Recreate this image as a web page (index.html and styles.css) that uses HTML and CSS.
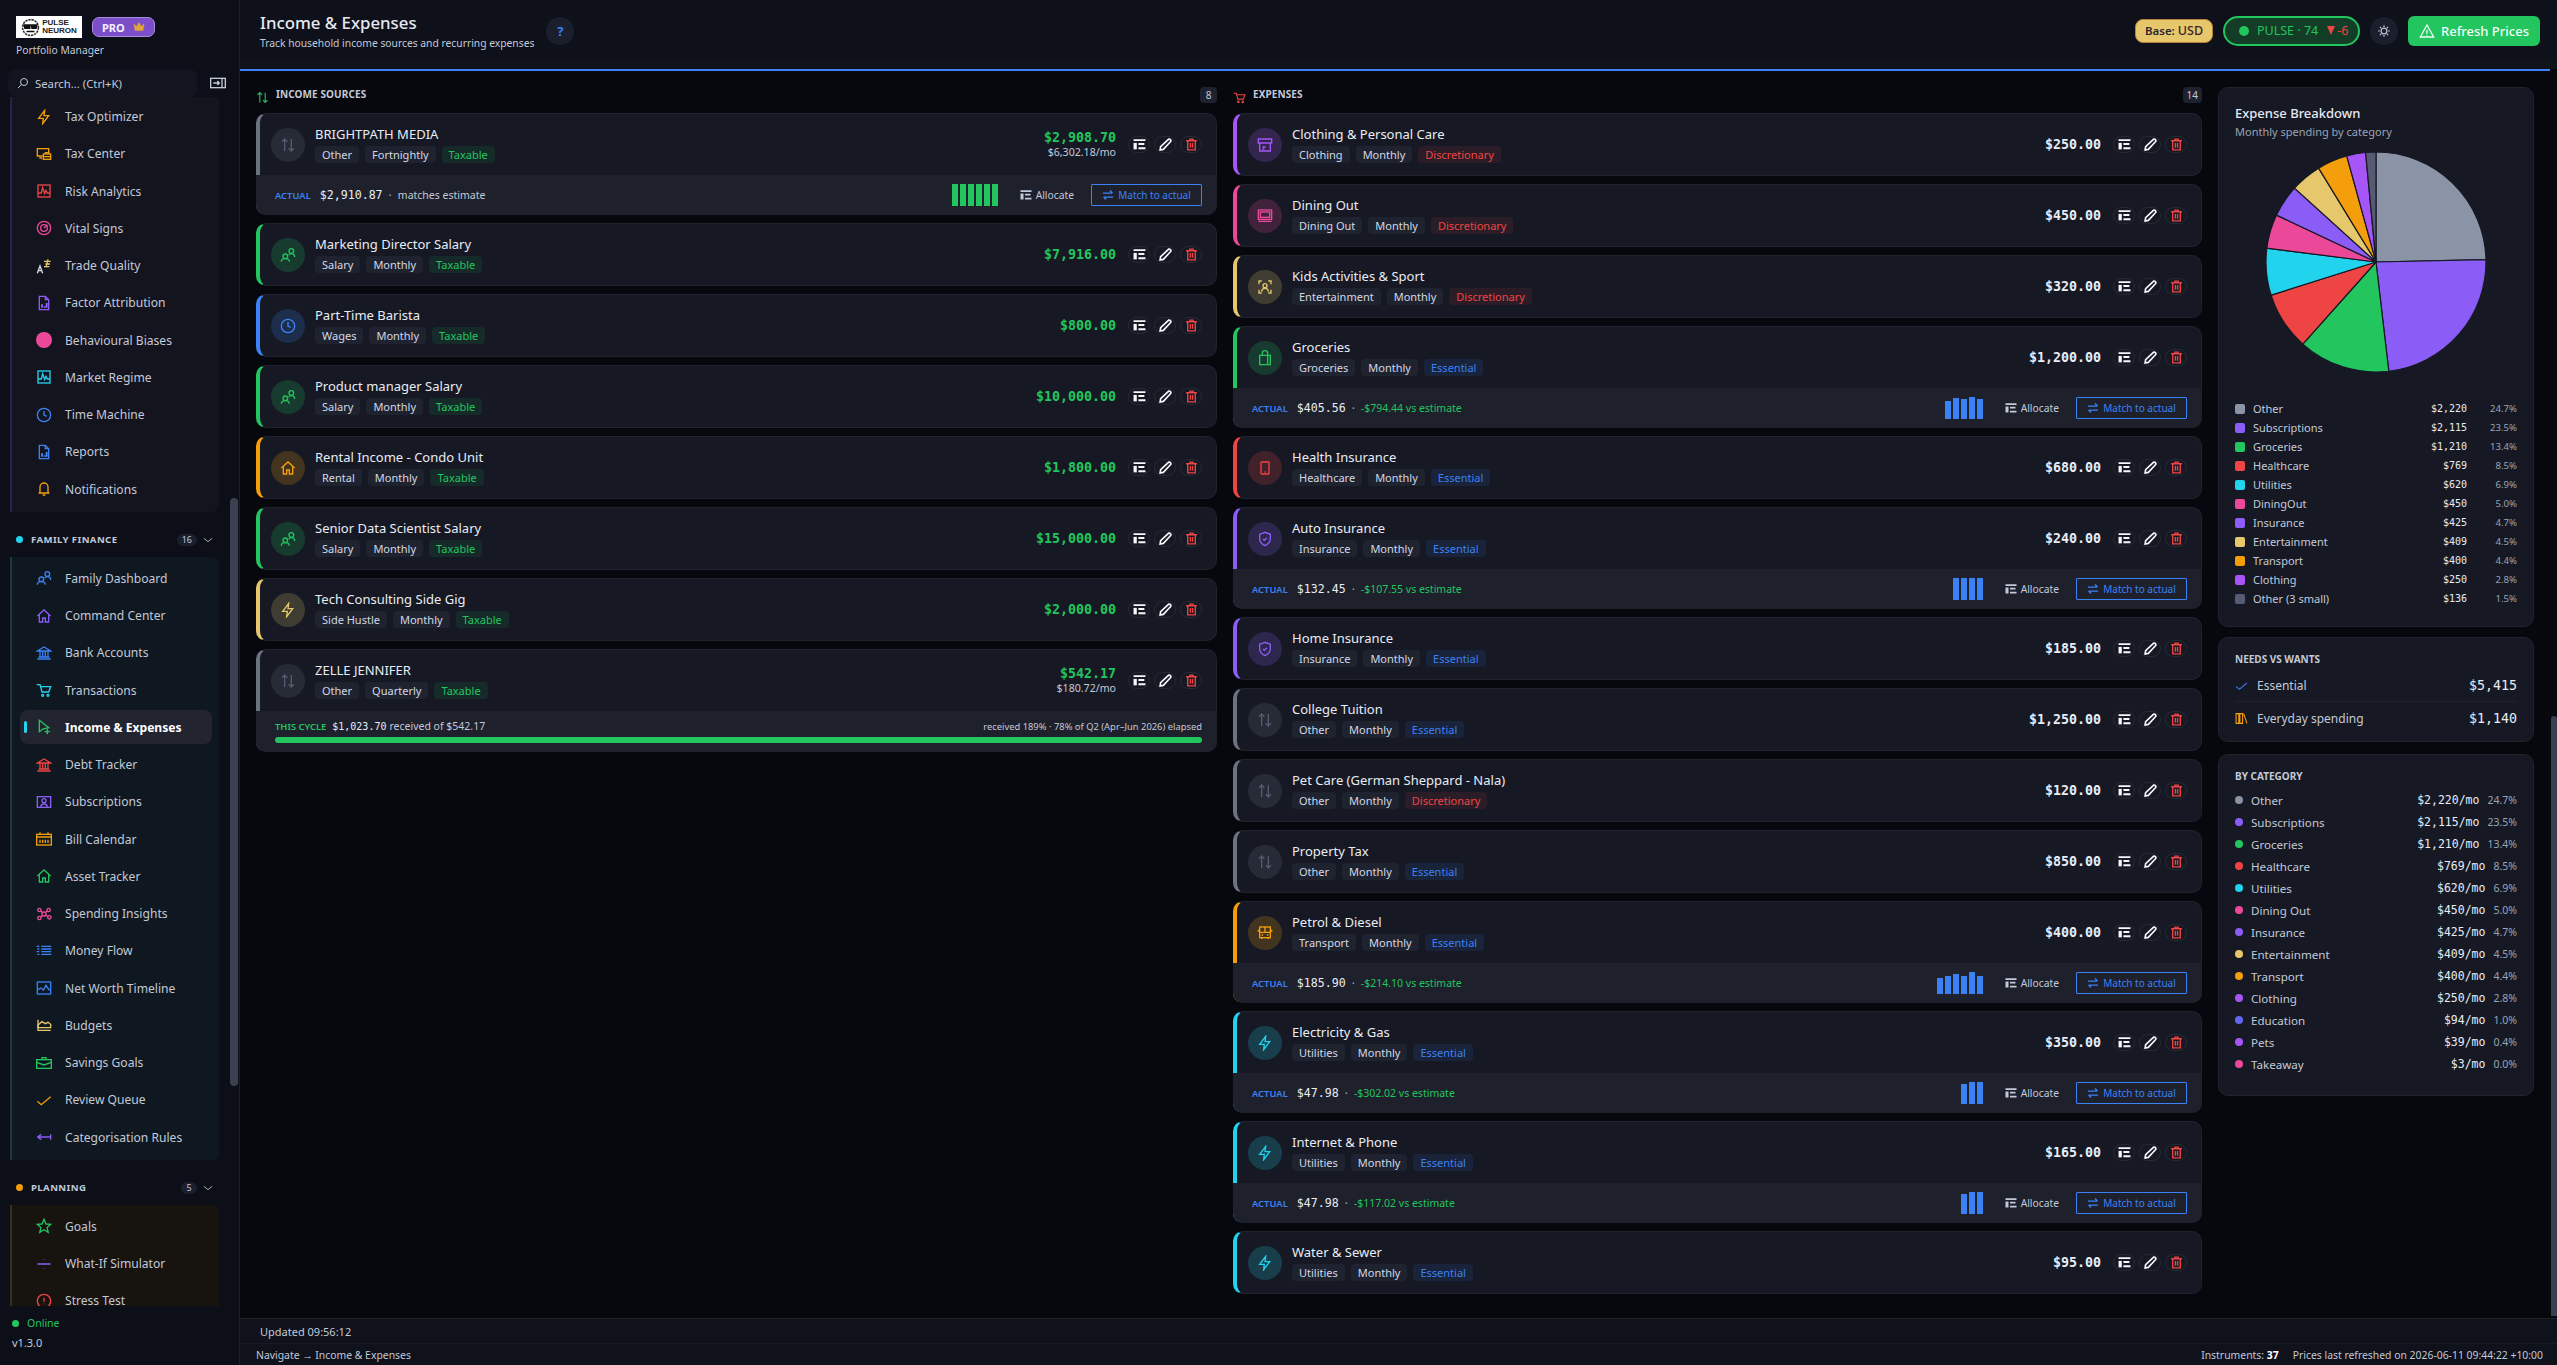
FILE: index.html
```html
<!DOCTYPE html>
<html lang="en">
<head>
    <meta charset="UTF-8">
    <title>Income &amp; Expenses</title>
    <link rel="stylesheet" href="styles.css">
</head>
<body>
    <!-- icon sheet -->
    <svg class="sheet" xmlns="http://www.w3.org/2000/svg">
        <symbol id="i-zap" viewBox="0 0 24 24"><path d="M13 2 4 14h7l-1 8 9-12h-7z"/></symbol>
        <symbol id="i-tax" viewBox="0 0 24 24"><path d="M10 15H2V4h17v7M5 18h4"/><rect x="11" y="12" width="11" height="8"/><path d="M14 12v-2h5v2M11 16h11"/></symbol>
        <symbol id="i-chartbox" viewBox="0 0 24 24"><rect x="3" y="3" width="18" height="18"/><path d="M3 15h5l2-8 3 9 2-5 2 4h4"/></symbol>
        <symbol id="i-gauge" viewBox="0 0 24 24"><circle cx="12" cy="12" r="10"/><circle cx="12" cy="12" r="5"/><path d="m12 12 5-5"/></symbol>
        <symbol id="i-trade" viewBox="0 0 24 24"><path d="M12 5h10M14 9h7M12 13h8M18 2l-3 12"/><path d="M2 23 6 12l4 11M4 19h4" stroke="#d8dce6"/></symbol>
        <symbol id="i-filebars" viewBox="0 0 24 24"><path d="M5 2h9l5 5v15H5z"/><path d="M14 2v5h5"/><path d="M9 19v-5M13 19v-2M16 19v-7" stroke-width="3"/></symbol>
        <symbol id="i-clock" viewBox="0 0 24 24"><circle cx="12" cy="12" r="10"/><path d="M12 6v6l4 2"/></symbol>
        <symbol id="i-bell" viewBox="0 0 24 24"><path d="M6 17V9a6 6 0 0 1 12 0v8l2 1H4zM10 21h4M12 2v1"/></symbol>
        <symbol id="i-users" viewBox="0 0 24 24"><circle cx="8" cy="14" r="3.5"/><path d="M2 22c0-3 2-4.5 6-4.5s6 1.500 6 4.500"/><circle cx="17" cy="6" r="3.500"/><path d="M13 12c1-1 2-2 4-2 3 0 5 2 5 5"/></symbol>
        <symbol id="i-home" viewBox="0 0 24 24"><path d="M2 12 12 3l10 9"/><path d="M5 10v11h5v-6h4v6h5V10"/></symbol>
        <symbol id="i-bank" viewBox="0 0 24 24"><path d="M2 9l10-6 10 6zM2 21h20M4 18h16M6 9v9M10 9v9M14 9v9M18 9v9"/></symbol>
        <symbol id="i-cart" viewBox="0 0 24 24"><path d="M1 4h5l3 11h10l3-8H7"/><circle cx="10" cy="20" r="1.500"/><circle cx="18" cy="20" r="1.500"/></symbol>
        <symbol id="i-cursor" viewBox="0 0 24 24"><path d="M5 2v17l5-4 9-2z"/><path d="M13 19h8M17 15v8"/></symbol>
        <symbol id="i-sub" viewBox="0 0 24 24"><rect x="2" y="4" width="20" height="16"/><circle cx="12" cy="10" r="3"/><path d="M7 20c0-3 2-5 5-5s5 2 5 5"/></symbol>
        <symbol id="i-cal" viewBox="0 0 24 24"><rect x="1" y="5" width="22" height="16"/><path d="M1 9h22M6 2v4M18 2v4M6 13v5M10 13v5M14 13v5M18 13v5"/></symbol>
        <symbol id="i-net" viewBox="0 0 24 24"><circle cx="12" cy="12" r="3"/><circle cx="5" cy="6" r="2.500"/><circle cx="19" cy="6" r="2.500"/><circle cx="5" cy="18" r="2.500"/><circle cx="20" cy="17" r="2.500"/><path d="m7 7 3 3M17 7l-3 3M7 17l3-3M18 16l-4-3"/></symbol>
        <symbol id="i-flow" viewBox="0 0 24 24"><path d="M8 5h15M8 9h15M8 13h15M8 17h15M1 5h4M2 9h3M1 13h4M2 17h3"/></symbol>
        <symbol id="i-area" viewBox="0 0 24 24"><rect x="2" y="3" width="20" height="18"/><path d="m2 15 5-3 4 3 4-7 4 6 3 1"/></symbol>
        <symbol id="i-budget" viewBox="0 0 24 24"><path d="M3 4v16h19"/><path d="M3 12l6-5 5 3 4-2 4 3v5H3z"/></symbol>
        <symbol id="i-case" viewBox="0 0 24 24"><rect x="1" y="7" width="22" height="13"/><path d="M9 7V4h6v3M1 11l11 4 11-4"/></symbol>
        <symbol id="i-check" viewBox="0 0 24 24"><path d="M2 14l6 5L22 7"/></symbol>
        <symbol id="i-rule" viewBox="0 0 24 24"><path d="M2 12h19M2 12l6-4M2 12l6 4M22 8v8"/></symbol>
        <symbol id="i-star" viewBox="0 0 24 24"><path d="m12 2 3 7 7 .6-5.300 4.700 1.600 7.200L12 17.500 5.700 21.500l1.600-7.200L2 9.600 9 9z"/></symbol>
        <symbol id="i-divide" viewBox="0 0 24 24"><path d="M2 12h20M12 5v.5M12 18.500v.5"/></symbol>
        <symbol id="i-alert" viewBox="0 0 24 24"><circle cx="12" cy="12" r="10"/><path d="M12 7v6M12 16v1"/></symbol>
        <symbol id="i-updown" viewBox="0 0 24 24"><path d="M7 21V3M3 7l4-4 4 4M17 3v18M13 17l4 4 4-4"/></symbol>
        <symbol id="i-archive" viewBox="0 0 24 24"><path d="M2 3h20v6H2zM4 9v12h16V9M8 15h5M8 18h3"/></symbol>
        <symbol id="i-monitor" viewBox="0 0 24 24"><rect x="2" y="3" width="20" height="14"/><rect x="5" y="6" width="14" height="8"/><path d="M2 20h20"/></symbol>
        <symbol id="i-scan" viewBox="0 0 24 24"><path d="M3 8V3h4M17 3h4v5M21 16v5h-4M7 21H3v-5"/><circle cx="12" cy="10" r="3"/><path d="M7 19c0-3 2-5 5-5s5 2 5 5"/></symbol>
        <symbol id="i-bag" viewBox="0 0 24 24"><path d="M4 8h16v14H4z"/><path d="M8 8V5a4 4 0 0 1 8 0v3M16 8v14"/></symbol>
        <symbol id="i-tablet" viewBox="0 0 24 24"><rect x="6" y="3" width="12" height="18" rx="1"/><path d="M11 18h2"/></symbol>
        <symbol id="i-shield" viewBox="0 0 24 24"><path d="M12 2 4 5v7c0 5 4 8 8 10 4-2 8-5 8-10V5z"/><path d="m9 12 2 2 4-4"/></symbol>
        <symbol id="i-bus" viewBox="0 0 24 24"><rect x="4" y="3" width="16" height="16"/><path d="M4 11h16M12 3v8M2 7v3M22 7v3M7 19v2M17 19v2M7 15h2M15 15h2"/></symbol>
        <symbol id="i-search" viewBox="0 0 24 24"><circle cx="14" cy="10" r="7"/><path d="M9 15 2 22"/></symbol>
        <symbol id="i-panel" viewBox="0 0 24 24"><rect x="1" y="5" width="22" height="14"/><path d="M5 12h9M11 9l3 3-3 3M18 5v14"/></symbol>
        <symbol id="i-sun" viewBox="0 0 24 24"><circle cx="12" cy="12" r="5"/><path d="M12 2v3M12 19v3M2 12h3M19 12h3M5 5l2 2M17 17l2 2M5 19l2-2M17 7l2-2"/></symbol>
        <symbol id="i-warn" viewBox="0 0 24 24"><path d="M12 3 2 21h20z"/><path d="M12 10v6M12 18v1"/></symbol>
        <symbol id="i-list" viewBox="0 0 24 24"><path d="M1 9h6v12H1z" fill="currentColor" stroke="none"/><path d="M1 4h22M10 11h11M10 19h13" stroke-width="3.500"/></symbol>
        <symbol id="i-pencil" viewBox="0 0 24 24"><path d="M18 2a3.500 3.500 0 0 1 4 4L8 21l-6 1 1-6z" stroke-width="3"/></symbol>
        <symbol id="i-trash" viewBox="0 0 24 24"><path d="M2 5h20M9 5V2h6v3M5 5v17h14V5M10 9v9M14 9v9" stroke-width="2.500"/></symbol>
        <symbol id="i-swap" viewBox="0 0 24 24"><path d="M2 8h18M16 3l5 5M22 16H4M8 21l-5-5" stroke-width="2.500"/></symbol>
        <symbol id="i-books" viewBox="0 0 24 24"><path d="M2 3h5v18H2zM9 3h5v18H9zM16 3l6 18"/></symbol>
        <symbol id="i-crown" viewBox="0 0 24 24"><path d="M2 6l5 5 5-8 5 8 5-5-2 13H4z" fill="currentColor"/></symbol>
    </svg>

    <!-- menu lateral -->
    <aside class="sidebar">
        <div class="side-top">
            <div class="brand">
                <div class="logo">
                    <svg class="logo-mark" viewBox="0 0 24 24"><circle cx="12" cy="12" r="10" fill="none" stroke="#333" stroke-width="2" stroke-dasharray="3 1"/><path d="M4 9h7v4H5zM13 9h7l-1 4h-5zM7 17h10" fill="#111" stroke="#111"/></svg>
                    <div class="logo-text"><span>PULSE</span><span>NEURON</span></div>
                </div>
                <span class="pro">PRO <svg class="crown"><use href="#i-crown"/></svg></span>
            </div>
            <div class="side-sub">Portfolio Manager</div>
            <div class="search-row">
                <div class="search"><svg class="ico ico-search"><use href="#i-search"/></svg>Search... (Ctrl+K)</div>
                <svg class="ico ico-panel"><use href="#i-panel"/></svg>
            </div>
        </div>
        <div class="side-scroll">
            <nav class="nav">
                <div class="group g-first">
                    <a class="item"><svg class="ico t-orange"><use href="#i-zap"/></svg>Tax Optimizer</a>
                    <a class="item"><svg class="ico t-orange"><use href="#i-tax"/></svg>Tax Center</a>
                    <a class="item"><svg class="ico t-red"><use href="#i-chartbox"/></svg>Risk Analytics</a>
                    <a class="item"><svg class="ico t-pink"><use href="#i-gauge"/></svg>Vital Signs</a>
                    <a class="item"><svg class="ico t-yellow"><use href="#i-trade"/></svg>Trade Quality</a>
                    <a class="item"><svg class="ico t-violet"><use href="#i-filebars"/></svg>Factor Attribution</a>
                    <a class="item"><span class="ball"></span>Behavioural Biases</a>
                    <a class="item"><svg class="ico t-cyan"><use href="#i-chartbox"/></svg>Market Regime</a>
                    <a class="item"><svg class="ico t-blue"><use href="#i-clock"/></svg>Time Machine</a>
                    <a class="item"><svg class="ico t-blue"><use href="#i-filebars"/></svg>Reports</a>
                    <a class="item"><svg class="ico t-orange"><use href="#i-bell"/></svg>Notifications</a>
                </div>

                <div class="sec-head"><span class="sec-dot t-cyan"></span><span class="sec-name">Family Finance</span><span class="sec-count">16</span><svg class="chev" viewBox="0 0 12 6"><path d="M1 1l5 4 5-4"/></svg></div>
                <div class="group g-family">
                    <a class="item"><svg class="ico t-blue"><use href="#i-users"/></svg>Family Dashboard</a>
                    <a class="item"><svg class="ico t-violet"><use href="#i-home"/></svg>Command Center</a>
                    <a class="item"><svg class="ico t-blue"><use href="#i-bank"/></svg>Bank Accounts</a>
                    <a class="item"><svg class="ico t-cyan"><use href="#i-cart"/></svg>Transactions</a>
                    <a class="item active"><svg class="ico t-green"><use href="#i-cursor"/></svg>Income &amp; Expenses</a>
                    <a class="item"><svg class="ico t-red"><use href="#i-bank"/></svg>Debt Tracker</a>
                    <a class="item"><svg class="ico t-violet"><use href="#i-sub"/></svg>Subscriptions</a>
                    <a class="item"><svg class="ico t-orange"><use href="#i-cal"/></svg>Bill Calendar</a>
                    <a class="item"><svg class="ico t-green"><use href="#i-home"/></svg>Asset Tracker</a>
                    <a class="item"><svg class="ico t-pink"><use href="#i-net"/></svg>Spending Insights</a>
                    <a class="item"><svg class="ico t-blue"><use href="#i-flow"/></svg>Money Flow</a>
                    <a class="item"><svg class="ico t-blue"><use href="#i-area"/></svg>Net Worth Timeline</a>
                    <a class="item"><svg class="ico t-yellow"><use href="#i-budget"/></svg>Budgets</a>
                    <a class="item"><svg class="ico t-green"><use href="#i-case"/></svg>Savings Goals</a>
                    <a class="item"><svg class="ico t-orange"><use href="#i-check"/></svg>Review Queue</a>
                    <a class="item"><svg class="ico t-violet"><use href="#i-rule"/></svg>Categorisation Rules</a>
                </div>

                <div class="sec-head"><span class="sec-dot t-orange"></span><span class="sec-name">Planning</span><span class="sec-count">5</span><svg class="chev" viewBox="0 0 12 6"><path d="M1 1l5 4 5-4"/></svg></div>
                <div class="group g-plan">
                    <a class="item"><svg class="ico t-green"><use href="#i-star"/></svg>Goals</a>
                    <a class="item"><svg class="ico t-violet"><use href="#i-divide"/></svg>What-If Simulator</a>
                    <a class="item"><svg class="ico t-red"><use href="#i-alert"/></svg>Stress Test</a>
                </div>
            </nav>
            <div class="bar-track side-track"><div class="bar-thumb"></div></div>
        </div>
        <div class="side-foot">
            <div class="online"><span class="online-dot"></span>Online</div>
            <div class="version">v1.3.0</div>
        </div>
    </aside>

    <!-- conteudo -->
    <div class="page">
        <header class="top">
            <div>
                <h1>Income &amp; Expenses</h1>
                <p>Track household income sources and recurring expenses</p>
            </div>
            <span class="help">?</span>
            <div class="top-right">
                <span class="base">Base: <b>USD</b></span>
                <span class="pulse"><span class="pulse-dot"></span>PULSE · 74<span class="pulse-down"><i class="tri"></i>-6</span></span>
                <span class="theme"><svg class="ico"><use href="#i-sun"/></svg></span>
                <button class="refresh"><svg class="ico"><use href="#i-warn"/></svg>Refresh Prices</button>
            </div>
        </header>
        <div class="band"></div>
        <div class="body">
            <div class="line-wrap">
                <div class="blue-line"></div>
                <main class="cols">
                    <section class="col-income">
                        <div class="col-head"><svg class="ico t-green"><use href="#i-updown"/></svg><span class="col-name">Income Sources</span><span class="col-count">8</span></div>
                        <div class="list">
                            <article class="card c-gray">
                                <div class="main">
                                    <span class="circle dim"><svg class="ico"><use href="#i-updown"/></svg></span>
                                    <div class="info"><div class="name">BRIGHTPATH MEDIA</div><div class="tags"><span class="tag">Other</span><span class="tag">Fortnightly</span><span class="tag tag-green">Taxable</span></div></div>
                                    <div class="amt-box"><div class="amt green">$2,908.70</div><div class="amt-sub">$6,302.18/mo</div></div>
                                    <div class="acts"><button class="act"><svg><use href="#i-list"/></svg></button><button class="act"><svg><use href="#i-pencil"/></svg></button><button class="act del"><svg><use href="#i-trash"/></svg></button></div>
                                </div>
                                <div class="actual">
                                    <span class="a-label">ACTUAL</span><span class="a-amt">$2,910.87</span><span class="a-dot">·</span><span class="a-note">matches estimate</span>
                                    <span class="bars green-bars"><i class="h22"></i><i class="h22"></i><i class="h22"></i><i class="h22"></i><i class="h22"></i><i class="h22"></i></span>
                                    <span class="alloc"><svg><use href="#i-list"/></svg>Allocate</span>
                                    <button class="match"><svg><use href="#i-swap"/></svg>Match to actual</button>
                                </div>
                            </article>
                            <article class="card c-green">
                                <div class="main">
                                    <span class="circle"><svg class="ico"><use href="#i-users"/></svg></span>
                                    <div class="info"><div class="name">Marketing Director Salary</div><div class="tags"><span class="tag">Salary</span><span class="tag">Monthly</span><span class="tag tag-green">Taxable</span></div></div>
                                    <div class="amt-box"><div class="amt green">$7,916.00</div></div>
                                    <div class="acts"><button class="act"><svg><use href="#i-list"/></svg></button><button class="act"><svg><use href="#i-pencil"/></svg></button><button class="act del"><svg><use href="#i-trash"/></svg></button></div>
                                </div>
                            </article>
                            <article class="card c-blue">
                                <div class="main">
                                    <span class="circle"><svg class="ico"><use href="#i-clock"/></svg></span>
                                    <div class="info"><div class="name">Part-Time Barista</div><div class="tags"><span class="tag">Wages</span><span class="tag">Monthly</span><span class="tag tag-green">Taxable</span></div></div>
                                    <div class="amt-box"><div class="amt green">$800.00</div></div>
                                    <div class="acts"><button class="act"><svg><use href="#i-list"/></svg></button><button class="act"><svg><use href="#i-pencil"/></svg></button><button class="act del"><svg><use href="#i-trash"/></svg></button></div>
                                </div>
                            </article>
                            <article class="card c-green">
                                <div class="main">
                                    <span class="circle"><svg class="ico"><use href="#i-users"/></svg></span>
                                    <div class="info"><div class="name">Product manager Salary</div><div class="tags"><span class="tag">Salary</span><span class="tag">Monthly</span><span class="tag tag-green">Taxable</span></div></div>
                                    <div class="amt-box"><div class="amt green">$10,000.00</div></div>
                                    <div class="acts"><button class="act"><svg><use href="#i-list"/></svg></button><button class="act"><svg><use href="#i-pencil"/></svg></button><button class="act del"><svg><use href="#i-trash"/></svg></button></div>
                                </div>
                            </article>
                            <article class="card c-orange">
                                <div class="main">
                                    <span class="circle"><svg class="ico"><use href="#i-home"/></svg></span>
                                    <div class="info"><div class="name">Rental Income - Condo Unit</div><div class="tags"><span class="tag">Rental</span><span class="tag">Monthly</span><span class="tag tag-green">Taxable</span></div></div>
                                    <div class="amt-box"><div class="amt green">$1,800.00</div></div>
                                    <div class="acts"><button class="act"><svg><use href="#i-list"/></svg></button><button class="act"><svg><use href="#i-pencil"/></svg></button><button class="act del"><svg><use href="#i-trash"/></svg></button></div>
                                </div>
                            </article>
                            <article class="card c-green">
                                <div class="main">
                                    <span class="circle"><svg class="ico"><use href="#i-users"/></svg></span>
                                    <div class="info"><div class="name">Senior Data Scientist Salary</div><div class="tags"><span class="tag">Salary</span><span class="tag">Monthly</span><span class="tag tag-green">Taxable</span></div></div>
                                    <div class="amt-box"><div class="amt green">$15,000.00</div></div>
                                    <div class="acts"><button class="act"><svg><use href="#i-list"/></svg></button><button class="act"><svg><use href="#i-pencil"/></svg></button><button class="act del"><svg><use href="#i-trash"/></svg></button></div>
                                </div>
                            </article>
                            <article class="card c-yellow">
                                <div class="main">
                                    <span class="circle"><svg class="ico"><use href="#i-zap"/></svg></span>
                                    <div class="info"><div class="name">Tech Consulting Side Gig</div><div class="tags"><span class="tag">Side Hustle</span><span class="tag">Monthly</span><span class="tag tag-green">Taxable</span></div></div>
                                    <div class="amt-box"><div class="amt green">$2,000.00</div></div>
                                    <div class="acts"><button class="act"><svg><use href="#i-list"/></svg></button><button class="act"><svg><use href="#i-pencil"/></svg></button><button class="act del"><svg><use href="#i-trash"/></svg></button></div>
                                </div>
                            </article>
                            <article class="card c-gray">
                                <div class="main">
                                    <span class="circle dim"><svg class="ico"><use href="#i-updown"/></svg></span>
                                    <div class="info"><div class="name">ZELLE JENNIFER</div><div class="tags"><span class="tag">Other</span><span class="tag">Quarterly</span><span class="tag tag-green">Taxable</span></div></div>
                                    <div class="amt-box"><div class="amt green">$542.17</div><div class="amt-sub">$180.72/mo</div></div>
                                    <div class="acts"><button class="act"><svg><use href="#i-list"/></svg></button><button class="act"><svg><use href="#i-pencil"/></svg></button><button class="act del"><svg><use href="#i-trash"/></svg></button></div>
                                </div>
                                <div class="cycle">
                                    <div class="cycle-row"><span class="a-label cycle-label">THIS CYCLE</span><span class="a-amt">$1,023.70</span><span class="a-note">received of $542.17</span><span class="cycle-right">received 189% · 78% of Q2 (Apr–Jun 2026) elapsed</span></div>
                                    <div class="progress"></div>
                                </div>
                            </article>
                        </div>
                    </section>

                    <section class="col-expense">
                        <div class="col-head"><svg class="ico t-red"><use href="#i-cart"/></svg><span class="col-name">Expenses</span><span class="col-count">14</span></div>
                        <div class="list">
                            <article class="card c-purple">
                                <div class="main">
                                    <span class="circle"><svg class="ico"><use href="#i-archive"/></svg></span>
                                    <div class="info"><div class="name">Clothing &amp; Personal Care</div><div class="tags"><span class="tag">Clothing</span><span class="tag">Monthly</span><span class="tag tag-red">Discretionary</span></div></div>
                                    <div class="amt-box"><div class="amt">$250.00</div></div>
                                    <div class="acts"><button class="act"><svg><use href="#i-list"/></svg></button><button class="act"><svg><use href="#i-pencil"/></svg></button><button class="act del"><svg><use href="#i-trash"/></svg></button></div>
                                </div>
                            </article>
                            <article class="card c-pink">
                                <div class="main">
                                    <span class="circle"><svg class="ico"><use href="#i-monitor"/></svg></span>
                                    <div class="info"><div class="name">Dining Out</div><div class="tags"><span class="tag">Dining Out</span><span class="tag">Monthly</span><span class="tag tag-red">Discretionary</span></div></div>
                                    <div class="amt-box"><div class="amt">$450.00</div></div>
                                    <div class="acts"><button class="act"><svg><use href="#i-list"/></svg></button><button class="act"><svg><use href="#i-pencil"/></svg></button><button class="act del"><svg><use href="#i-trash"/></svg></button></div>
                                </div>
                            </article>
                            <article class="card c-yellow">
                                <div class="main">
                                    <span class="circle"><svg class="ico"><use href="#i-scan"/></svg></span>
                                    <div class="info"><div class="name">Kids Activities &amp; Sport</div><div class="tags"><span class="tag">Entertainment</span><span class="tag">Monthly</span><span class="tag tag-red">Discretionary</span></div></div>
                                    <div class="amt-box"><div class="amt">$320.00</div></div>
                                    <div class="acts"><button class="act"><svg><use href="#i-list"/></svg></button><button class="act"><svg><use href="#i-pencil"/></svg></button><button class="act del"><svg><use href="#i-trash"/></svg></button></div>
                                </div>
                            </article>
                            <article class="card c-green">
                                <div class="main">
                                    <span class="circle"><svg class="ico"><use href="#i-bag"/></svg></span>
                                    <div class="info"><div class="name">Groceries</div><div class="tags"><span class="tag">Groceries</span><span class="tag">Monthly</span><span class="tag tag-blue">Essential</span></div></div>
                                    <div class="amt-box"><div class="amt">$1,200.00</div></div>
                                    <div class="acts"><button class="act"><svg><use href="#i-list"/></svg></button><button class="act"><svg><use href="#i-pencil"/></svg></button><button class="act del"><svg><use href="#i-trash"/></svg></button></div>
                                </div>
                                <div class="actual">
                                    <span class="a-label">ACTUAL</span><span class="a-amt">$405.56</span><span class="a-dot">·</span><span class="a-note under">-$794.44 vs estimate</span>
                                    <span class="bars"><i class="h18"></i><i class="h21"></i><i class="h20"></i><i class="h22"></i><i class="h20"></i></span>
                                    <span class="alloc"><svg><use href="#i-list"/></svg>Allocate</span>
                                    <button class="match"><svg><use href="#i-swap"/></svg>Match to actual</button>
                                </div>
                            </article>
                            <article class="card c-red">
                                <div class="main">
                                    <span class="circle"><svg class="ico"><use href="#i-tablet"/></svg></span>
                                    <div class="info"><div class="name">Health Insurance</div><div class="tags"><span class="tag">Healthcare</span><span class="tag">Monthly</span><span class="tag tag-blue">Essential</span></div></div>
                                    <div class="amt-box"><div class="amt">$680.00</div></div>
                                    <div class="acts"><button class="act"><svg><use href="#i-list"/></svg></button><button class="act"><svg><use href="#i-pencil"/></svg></button><button class="act del"><svg><use href="#i-trash"/></svg></button></div>
                                </div>
                            </article>
                            <article class="card c-violet">
                                <div class="main">
                                    <span class="circle"><svg class="ico"><use href="#i-shield"/></svg></span>
                                    <div class="info"><div class="name">Auto Insurance</div><div class="tags"><span class="tag">Insurance</span><span class="tag">Monthly</span><span class="tag tag-blue">Essential</span></div></div>
                                    <div class="amt-box"><div class="amt">$240.00</div></div>
                                    <div class="acts"><button class="act"><svg><use href="#i-list"/></svg></button><button class="act"><svg><use href="#i-pencil"/></svg></button><button class="act del"><svg><use href="#i-trash"/></svg></button></div>
                                </div>
                                <div class="actual">
                                    <span class="a-label">ACTUAL</span><span class="a-amt">$132.45</span><span class="a-dot">·</span><span class="a-note under">-$107.55 vs estimate</span>
                                    <span class="bars"><i class="h22"></i><i class="h22"></i><i class="h22"></i><i class="h22"></i></span>
                                    <span class="alloc"><svg><use href="#i-list"/></svg>Allocate</span>
                                    <button class="match"><svg><use href="#i-swap"/></svg>Match to actual</button>
                                </div>
                            </article>
                            <article class="card c-violet">
                                <div class="main">
                                    <span class="circle"><svg class="ico"><use href="#i-shield"/></svg></span>
                                    <div class="info"><div class="name">Home Insurance</div><div class="tags"><span class="tag">Insurance</span><span class="tag">Monthly</span><span class="tag tag-blue">Essential</span></div></div>
                                    <div class="amt-box"><div class="amt">$185.00</div></div>
                                    <div class="acts"><button class="act"><svg><use href="#i-list"/></svg></button><button class="act"><svg><use href="#i-pencil"/></svg></button><button class="act del"><svg><use href="#i-trash"/></svg></button></div>
                                </div>
                            </article>
                            <article class="card c-gray">
                                <div class="main">
                                    <span class="circle dim"><svg class="ico"><use href="#i-updown"/></svg></span>
                                    <div class="info"><div class="name">College Tuition</div><div class="tags"><span class="tag">Other</span><span class="tag">Monthly</span><span class="tag tag-blue">Essential</span></div></div>
                                    <div class="amt-box"><div class="amt">$1,250.00</div></div>
                                    <div class="acts"><button class="act"><svg><use href="#i-list"/></svg></button><button class="act"><svg><use href="#i-pencil"/></svg></button><button class="act del"><svg><use href="#i-trash"/></svg></button></div>
                                </div>
                            </article>
                            <article class="card c-gray">
                                <div class="main">
                                    <span class="circle dim"><svg class="ico"><use href="#i-updown"/></svg></span>
                                    <div class="info"><div class="name">Pet Care (German Sheppard - Nala)</div><div class="tags"><span class="tag">Other</span><span class="tag">Monthly</span><span class="tag tag-red">Discretionary</span></div></div>
                                    <div class="amt-box"><div class="amt">$120.00</div></div>
                                    <div class="acts"><button class="act"><svg><use href="#i-list"/></svg></button><button class="act"><svg><use href="#i-pencil"/></svg></button><button class="act del"><svg><use href="#i-trash"/></svg></button></div>
                                </div>
                            </article>
                            <article class="card c-gray">
                                <div class="main">
                                    <span class="circle dim"><svg class="ico"><use href="#i-updown"/></svg></span>
                                    <div class="info"><div class="name">Property Tax</div><div class="tags"><span class="tag">Other</span><span class="tag">Monthly</span><span class="tag tag-blue">Essential</span></div></div>
                                    <div class="amt-box"><div class="amt">$850.00</div></div>
                                    <div class="acts"><button class="act"><svg><use href="#i-list"/></svg></button><button class="act"><svg><use href="#i-pencil"/></svg></button><button class="act del"><svg><use href="#i-trash"/></svg></button></div>
                                </div>
                            </article>
                            <article class="card c-orange">
                                <div class="main">
                                    <span class="circle"><svg class="ico"><use href="#i-bus"/></svg></span>
                                    <div class="info"><div class="name">Petrol &amp; Diesel</div><div class="tags"><span class="tag">Transport</span><span class="tag">Monthly</span><span class="tag tag-blue">Essential</span></div></div>
                                    <div class="amt-box"><div class="amt">$400.00</div></div>
                                    <div class="acts"><button class="act"><svg><use href="#i-list"/></svg></button><button class="act"><svg><use href="#i-pencil"/></svg></button><button class="act del"><svg><use href="#i-trash"/></svg></button></div>
                                </div>
                                <div class="actual">
                                    <span class="a-label">ACTUAL</span><span class="a-amt">$185.90</span><span class="a-dot">·</span><span class="a-note under">-$214.10 vs estimate</span>
                                    <span class="bars"><i class="h16"></i><i class="h18"></i><i class="h20"></i><i class="h18"></i><i class="h22"></i><i class="h18"></i></span>
                                    <span class="alloc"><svg><use href="#i-list"/></svg>Allocate</span>
                                    <button class="match"><svg><use href="#i-swap"/></svg>Match to actual</button>
                                </div>
                            </article>
                            <article class="card c-cyan">
                                <div class="main">
                                    <span class="circle"><svg class="ico"><use href="#i-zap"/></svg></span>
                                    <div class="info"><div class="name">Electricity &amp; Gas</div><div class="tags"><span class="tag">Utilities</span><span class="tag">Monthly</span><span class="tag tag-blue">Essential</span></div></div>
                                    <div class="amt-box"><div class="amt">$350.00</div></div>
                                    <div class="acts"><button class="act"><svg><use href="#i-list"/></svg></button><button class="act"><svg><use href="#i-pencil"/></svg></button><button class="act del"><svg><use href="#i-trash"/></svg></button></div>
                                </div>
                                <div class="actual">
                                    <span class="a-label">ACTUAL</span><span class="a-amt">$47.98</span><span class="a-dot">·</span><span class="a-note under">-$302.02 vs estimate</span>
                                    <span class="bars"><i class="h20"></i><i class="h22"></i><i class="h22"></i></span>
                                    <span class="alloc"><svg><use href="#i-list"/></svg>Allocate</span>
                                    <button class="match"><svg><use href="#i-swap"/></svg>Match to actual</button>
                                </div>
                            </article>
                            <article class="card c-cyan">
                                <div class="main">
                                    <span class="circle"><svg class="ico"><use href="#i-zap"/></svg></span>
                                    <div class="info"><div class="name">Internet &amp; Phone</div><div class="tags"><span class="tag">Utilities</span><span class="tag">Monthly</span><span class="tag tag-blue">Essential</span></div></div>
                                    <div class="amt-box"><div class="amt">$165.00</div></div>
                                    <div class="acts"><button class="act"><svg><use href="#i-list"/></svg></button><button class="act"><svg><use href="#i-pencil"/></svg></button><button class="act del"><svg><use href="#i-trash"/></svg></button></div>
                                </div>
                                <div class="actual">
                                    <span class="a-label">ACTUAL</span><span class="a-amt">$47.98</span><span class="a-dot">·</span><span class="a-note under">-$117.02 vs estimate</span>
                                    <span class="bars"><i class="h20"></i><i class="h22"></i><i class="h22"></i></span>
                                    <span class="alloc"><svg><use href="#i-list"/></svg>Allocate</span>
                                    <button class="match"><svg><use href="#i-swap"/></svg>Match to actual</button>
                                </div>
                            </article>
                            <article class="card c-cyan">
                                <div class="main">
                                    <span class="circle"><svg class="ico"><use href="#i-zap"/></svg></span>
                                    <div class="info"><div class="name">Water &amp; Sewer</div><div class="tags"><span class="tag">Utilities</span><span class="tag">Monthly</span><span class="tag tag-blue">Essential</span></div></div>
                                    <div class="amt-box"><div class="amt">$95.00</div></div>
                                    <div class="acts"><button class="act"><svg><use href="#i-list"/></svg></button><button class="act"><svg><use href="#i-pencil"/></svg></button><button class="act del"><svg><use href="#i-trash"/></svg></button></div>
                                </div>
                            </article>
                        </div>
                    </section>

                    <section class="col-side">
                        <div class="panel panel-pie">
                            <div class="panel-title">Expense Breakdown</div>
                            <div class="panel-sub">Monthly spending by category</div>
                            <svg class="pie" viewBox="0 0 222 222">
                                <path fill="#8b93a7" d="M111 111 111 1A110 110 0 0 1 220.97 108.62Z"/>
                                <path fill="#8b5cf6" d="M111 111 220.97 108.62A110 110 0 0 1 123.8 220.25Z"/>
                                <path fill="#22c55e" d="M111 111 123.8 220.25A110 110 0 0 1 37.82 193.13Z"/>
                                <path fill="#ef4444" d="M111 111 37.82 193.13A110 110 0 0 1 6.12 144.16Z"/>
                                <path fill="#22d3ee" d="M111 111 6.12 144.16A110 110 0 0 1 1.88 97.14Z"/>
                                <path fill="#ec4899" d="M111 111 1.88 97.14A110 110 0 0 1 11.5 64.11Z"/>
                                <path fill="#8b5cf6" d="M111 111 11.5 64.11A110 110 0 0 1 29.53 37.09Z"/>
                                <path fill="#e6c76b" d="M111 111 29.53 37.09A110 110 0 0 1 53.64 17.14Z"/>
                                <path fill="#f59e0b" d="M111 111 53.64 17.14A110 110 0 0 1 81.73 4.96Z"/>
                                <path fill="#a855f7" d="M111 111 81.73 4.96A110 110 0 0 1 100.59 1.49Z"/>
                                <path fill="#565b73" d="M111 111 100.59 1.49A110 110 0 0 1 111 1Z"/>
                            </svg>
                            <div class="legend">
                                <div class="leg"><i class="sw" style="background:#8b93a7"></i><span class="leg-name">Other</span><span class="leg-val">$2,220</span><span class="leg-pct">24.7%</span></div>
                                <div class="leg"><i class="sw" style="background:#8b5cf6"></i><span class="leg-name">Subscriptions</span><span class="leg-val">$2,115</span><span class="leg-pct">23.5%</span></div>
                                <div class="leg"><i class="sw" style="background:#22c55e"></i><span class="leg-name">Groceries</span><span class="leg-val">$1,210</span><span class="leg-pct">13.4%</span></div>
                                <div class="leg"><i class="sw" style="background:#ef4444"></i><span class="leg-name">Healthcare</span><span class="leg-val">$769</span><span class="leg-pct">8.5%</span></div>
                                <div class="leg"><i class="sw" style="background:#22d3ee"></i><span class="leg-name">Utilities</span><span class="leg-val">$620</span><span class="leg-pct">6.9%</span></div>
                                <div class="leg"><i class="sw" style="background:#ec4899"></i><span class="leg-name">DiningOut</span><span class="leg-val">$450</span><span class="leg-pct">5.0%</span></div>
                                <div class="leg"><i class="sw" style="background:#8b5cf6"></i><span class="leg-name">Insurance</span><span class="leg-val">$425</span><span class="leg-pct">4.7%</span></div>
                                <div class="leg"><i class="sw" style="background:#e6c76b"></i><span class="leg-name">Entertainment</span><span class="leg-val">$409</span><span class="leg-pct">4.5%</span></div>
                                <div class="leg"><i class="sw" style="background:#f59e0b"></i><span class="leg-name">Transport</span><span class="leg-val">$400</span><span class="leg-pct">4.4%</span></div>
                                <div class="leg"><i class="sw" style="background:#a855f7"></i><span class="leg-name">Clothing</span><span class="leg-val">$250</span><span class="leg-pct">2.8%</span></div>
                                <div class="leg"><i class="sw" style="background:#565b73"></i><span class="leg-name">Other (3 small)</span><span class="leg-val">$136</span><span class="leg-pct">1.5%</span></div>
                            </div>
                        </div>
                        <div class="panel panel-needs">
                            <div class="panel-head">NEEDS VS WANTS</div>
                            <div class="need need-line"><svg class="ico t-blue"><use href="#i-check"/></svg><span class="need-name">Essential</span><span class="need-val">$5,415</span></div>
                            <div class="need"><svg class="ico t-orange"><use href="#i-books"/></svg><span class="need-name">Everyday spending</span><span class="need-val">$1,140</span></div>
                        </div>
                        <div class="panel panel-cats">
                            <div class="panel-head">BY CATEGORY</div>
                            <div class="cat"><i class="dot" style="background:#8b93a7"></i><span class="cat-name">Other</span><span class="cat-val">$2,220/mo</span><span class="cat-pct">24.7%</span></div>
                            <div class="cat"><i class="dot" style="background:#8b5cf6"></i><span class="cat-name">Subscriptions</span><span class="cat-val">$2,115/mo</span><span class="cat-pct">23.5%</span></div>
                            <div class="cat"><i class="dot" style="background:#22c55e"></i><span class="cat-name">Groceries</span><span class="cat-val">$1,210/mo</span><span class="cat-pct">13.4%</span></div>
                            <div class="cat"><i class="dot" style="background:#ef4444"></i><span class="cat-name">Healthcare</span><span class="cat-val">$769/mo</span><span class="cat-pct">8.5%</span></div>
                            <div class="cat"><i class="dot" style="background:#22d3ee"></i><span class="cat-name">Utilities</span><span class="cat-val">$620/mo</span><span class="cat-pct">6.9%</span></div>
                            <div class="cat"><i class="dot" style="background:#ec4899"></i><span class="cat-name">Dining Out</span><span class="cat-val">$450/mo</span><span class="cat-pct">5.0%</span></div>
                            <div class="cat"><i class="dot" style="background:#8b5cf6"></i><span class="cat-name">Insurance</span><span class="cat-val">$425/mo</span><span class="cat-pct">4.7%</span></div>
                            <div class="cat"><i class="dot" style="background:#e6c76b"></i><span class="cat-name">Entertainment</span><span class="cat-val">$409/mo</span><span class="cat-pct">4.5%</span></div>
                            <div class="cat"><i class="dot" style="background:#f59e0b"></i><span class="cat-name">Transport</span><span class="cat-val">$400/mo</span><span class="cat-pct">4.4%</span></div>
                            <div class="cat"><i class="dot" style="background:#a855f7"></i><span class="cat-name">Clothing</span><span class="cat-val">$250/mo</span><span class="cat-pct">2.8%</span></div>
                            <div class="cat"><i class="dot" style="background:#6366f1"></i><span class="cat-name">Education</span><span class="cat-val">$94/mo</span><span class="cat-pct">1.0%</span></div>
                            <div class="cat"><i class="dot" style="background:#a855f7"></i><span class="cat-name">Pets</span><span class="cat-val">$39/mo</span><span class="cat-pct">0.4%</span></div>
                            <div class="cat"><i class="dot" style="background:#ec4899"></i><span class="cat-name">Takeaway</span><span class="cat-val">$3/mo</span><span class="cat-pct">0.0%</span></div>
                        </div>
                    </section>
                </main>
            </div>
            <div class="bar-track main-track"><div class="bar-thumb"></div></div>
        </div>
        <div class="updated">Updated 09:56:12</div>
        <footer class="status">
            <span>Navigate → Income &amp; Expenses</span>
            <span class="status-right"><span>Instruments: <b>37</b></span><span>Prices last refreshed on 2026-06-11 09:44:22 +10:00</span></span>
        </footer>
    </div>
</body>
</html>
```
FILE: styles.css
```css
:root {
    --bg: #07080e;
    --side: #0c0f17;
    --top: #0e111a;
    --card: #161924;
    --card-low: #1e202c;
    --line: #20232e;
    --text: #e6e9f2;
    --soft: #c3c9d8;
    --mute: #9aa3b5;
    --green: #22c55e;
    --blue: #3b82f6;
    --red: #ef4444;
    --mono: "DejaVu Sans Mono", "Liberation Mono", monospace;
    --sans: "Noto Sans", "Open Sans", sans-serif;
}
* {
    box-sizing: border-box;
}
html, body {
    height: 100%;
}
body {
    margin: 0;
    display: flex;
    overflow: hidden;
    background: var(--bg);
    color: var(--text);
    font-family: var(--sans);
    font-size: 12px;
}
.sheet {
    display: none;
}
svg {
    fill: none;
    stroke: currentColor;
    stroke-width: 2;
}
.ico {
    width: 16px;
    height: 16px;
    flex: none;
}
.t-orange { color: #f59e0b; }
.t-red { color: #ef4444; }
.t-pink { color: #ec4899; }
.t-yellow { color: #e6c76b; }
.t-violet { color: #8b5cf6; }
.t-cyan { color: #22d3ee; }
.t-blue { color: #3b82f6; }
.t-green { color: #22c55e; }

/* sidebar */
.sidebar {
    width: 240px;
    flex: none;
    display: flex;
    flex-direction: column;
    background: var(--side);
    border-right: 1px solid #1c1f2a;
}
.side-top {
    padding: 16px 0 0 8px;
}
.brand {
    display: flex;
    align-items: center;
    gap: 10px;
    padding-left: 8px;
    height: 22px;
}
.logo {
    width: 66px;
    height: 22px;
    background: #fff;
    display: flex;
    align-items: center;
    justify-content: center;
    gap: 2px;
    color: #222;
}
.logo-mark {
    width: 19px;
    height: 19px;
}
.logo-text {
    display: flex;
    flex-direction: column;
    font-family: "Liberation Sans", sans-serif;
    font-weight: 700;
    font-size: 8px;
    line-height: 8px;
}
.pro {
    width: 63px;
    height: 20px;
    display: flex;
    align-items: center;
    gap: 6px;
    padding-left: 9px;
    background: #7c4fc9;
    border: 1px solid #a78be0;
    border-radius: 7px;
    color: #f4f0ff;
    font-weight: 700;
    font-size: 11px;
}
.crown {
    width: 16px;
    height: 12px;
    color: #e2a33a;
    stroke-width: 1;
}
.side-sub {
    margin: 5px 0 0 8px;
    height: 14px;
    line-height: 14px;
    font-size: 10.3px;
    color: var(--soft);
}
.search-row {
    display: flex;
    align-items: center;
    margin-top: 12px;
}
.search {
    width: 189px;
    height: 28px;
    display: flex;
    align-items: center;
    gap: 6px;
    padding-left: 9px;
    background: #12141f;
    border-radius: 8px;
    font-size: 11.3px;
    color: var(--soft);
}
.ico-search {
    width: 12px;
    height: 12px;
    color: var(--soft);
}
.ico-panel {
    margin-left: 13px;
    color: var(--soft);
    stroke-width: 2;
}
.side-scroll {
    flex: 1;
    display: flex;
    min-height: 0;
    overflow: hidden;
}
.nav {
    width: 222px;
    flex: none;
    padding-left: 10px;
}
.bar-track {
    width: 8px;
    flex: none;
}
.side-track {
    margin-left: 8px;
}
.side-track .bar-thumb {
    margin-top: 401px;
    height: 588px;
}
.bar-thumb {
    background: #3b4050;
    border-radius: 4px;
}
.group {
    width: 209px;
    padding: 3px 0 4px;
    border-radius: 0 8px 8px 0;
    border-left: 2px solid;
}
.g-first {
    margin-top: -2px;
    background: #14141f;
    border-color: #25234a;
}
.g-family {
    background: #0f1820;
    border-color: #1a3a40;
}
.g-plan {
    background: #17130f;
    border-color: #3a2f1a;
}
.item {
    position: relative;
    height: 37.25px;
    margin: 0 7px 0 8px;
    padding-left: 16px;
    display: flex;
    align-items: center;
    gap: 13px;
    color: var(--soft);
    font-size: 12.1px;
    white-space: nowrap;
}
.ball {
    width: 16px;
    height: 16px;
    flex: none;
    border-radius: 50%;
    background: #ec4899;
}
.item.active {
    height: 34px;
    margin-top: 1.6px;
    margin-bottom: 1.6px;
    background: #22242f;
    border-radius: 8px;
    color: #fff;
    font-weight: 700;
}
.item.active::before {
    content: "";
    position: absolute;
    left: 4px;
    top: 11px;
    width: 3px;
    height: 12px;
    border-radius: 2px;
    background: #22d3ee;
}
.sec-head {
    height: 18px;
    margin: 19px 0 8px;
    width: 209px;
    display: flex;
    align-items: center;
}
.sec-dot {
    width: 7px;
    height: 7px;
    border-radius: 50%;
    background: currentColor;
    margin-left: 6px;
}
.sec-name {
    margin-left: 8px;
    flex: 1;
    font-size: 9.6px;
    font-weight: 700;
    letter-spacing: .4px;
    text-transform: uppercase;
    color: var(--soft);
}
.sec-count {
    min-width: 16px;
    padding: 0 5px;
    height: 12px;
    line-height: 12px;
    border-radius: 6px;
    background: #1b1f2d;
    font-size: 9px;
    text-align: center;
    color: var(--soft);
}
.chev {
    width: 10px;
    height: 6px;
    margin: 0 6px 0 6px;
    color: var(--soft);
    stroke-width: 1;
}
.side-foot {
    height: 59px;
    flex: none;
    padding: 10px 0 0 12px;
    background: var(--side);
}
.online {
    display: flex;
    align-items: center;
    gap: 8px;
    height: 14px;
    color: var(--green);
    font-size: 10.5px;
}
.online-dot {
    width: 7px;
    height: 7px;
    border-radius: 50%;
    background: var(--green);
}
.version {
    margin-top: 5px;
    color: var(--soft);
    font-size: 11px;
}

/* topo */
.page {
    flex: 1;
    min-width: 0;
    display: flex;
    flex-direction: column;
}
.top {
    height: 61px;
    flex: none;
    display: flex;
    align-items: center;
    padding: 0 17px 0 20px;
    background: var(--top);
}
.top h1 {
    margin: 0;
    font-size: 16.8px;
    font-weight: 500;
    line-height: 24px;
}
.top p {
    margin: 0;
    font-size: 10.3px;
    line-height: 16px;
    color: var(--soft);
}
.help {
    width: 28px;
    height: 28px;
    margin-left: 12px;
    border-radius: 50%;
    background: #1b1f2d;
    color: var(--blue);
    font-weight: 700;
    font-size: 13px;
    display: flex;
    align-items: center;
    justify-content: center;
}
.top-right {
    margin-left: auto;
    display: flex;
    align-items: center;
    gap: 10px;
}
.base {
    width: 78px;
    height: 24px;
    display: flex;
    align-items: center;
    justify-content: center;
    gap: 3px;
    background: #e6c76b;
    border: 1px solid #b8823e;
    border-radius: 8px;
    color: #2b2433;
    font-size: 11.5px;
    font-weight: 600;
}
.base b {
    color: #3a1f2a;
    font-size: 12.5px;
    font-weight: 500;
}
.pulse {
    width: 137px;
    height: 30px;
    display: flex;
    align-items: center;
    padding-left: 14px;
    gap: 8px;
    background: #143d28;
    border: 2px solid var(--green);
    border-radius: 15px;
    color: var(--green);
    font-size: 12.5px;
}
.pulse-dot {
    width: 10px;
    height: 10px;
    border-radius: 50%;
    background: var(--green);
}
.pulse-down {
    display: flex;
    align-items: center;
    gap: 2px;
    margin-left: 1px;
    color: var(--red);
}
.tri {
    width: 0;
    height: 0;
    border-left: 4.5px solid transparent;
    border-right: 4.5px solid transparent;
    border-top: 9px solid var(--red);
}
.theme {
    width: 28px;
    height: 28px;
    border-radius: 50%;
    background: #1b1f2d;
    color: var(--soft);
    display: flex;
    align-items: center;
    justify-content: center;
}
.theme .ico {
    width: 14px;
    height: 14px;
}
.refresh {
    width: 132px;
    height: 30px;
    border: none;
    border-radius: 6px;
    background: var(--green);
    color: #f2fff7;
    display: flex;
    align-items: center;
    justify-content: center;
    gap: 6px;
    font-family: var(--sans);
    font-size: 13px;
    font-weight: 500;
}
.band {
    height: 8px;
    flex: none;
    background: #11131b;
}
.body {
    flex: 1;
    min-height: 0;
    display: flex;
    overflow: hidden;
}
.line-wrap {
    width: 2310px;
    flex: none;
}
.blue-line {
    height: 2px;
    background: var(--blue);
}
.main-track {
    width: 6px;
    margin-left: 1px;
}
.main-track .bar-thumb {
    margin-top: 647px;
    height: 600px;
    border-radius: 3px 3px 0 0;
}
.cols {
    display: grid;
    grid-template-columns: 961px 969px 316px;
    gap: 16px;
    padding: 16px 0 0 16px;
    align-items: start;
}

/* colunas */
.col-head {
    height: 16px;
    margin-bottom: 10px;
    display: flex;
    align-items: center;
}
.col-head .ico {
    width: 13px;
    height: 13px;
    margin-top: 5px;
}
.col-name {
    flex: 1;
    margin-left: 7px;
    margin-top: -3px;
    font-size: 10px;
    font-weight: 700;
    letter-spacing: .1px;
    text-transform: uppercase;
    color: var(--soft);
}
.col-count {
    min-width: 17px;
    height: 16px;
    padding: 0 4px;
    line-height: 16px;
    text-align: center;
    border-radius: 4px;
    background: #1e2230;
    color: var(--soft);
    font-size: 10px;
}
.list {
    display: flex;
    flex-direction: column;
    gap: 8px;
}
.card {
    border: 1px solid var(--line);
    border-left: 4px solid var(--c);
    border-radius: 10px;
    background: var(--card);
}
.c-gray { --c: #6b7280; }
.c-green { --c: #22c55e; }
.c-blue { --c: #3b82f6; }
.c-orange { --c: #f59e0b; }
.c-yellow { --c: #e6c76b; }
.c-purple { --c: #a855f7; }
.c-pink { --c: #ec4899; }
.c-red { --c: #ef4444; }
.c-violet { --c: #8b5cf6; }
.c-cyan { --c: #22d3ee; }
.main {
    height: 61px;
    display: flex;
    align-items: center;
    padding: 0 14px 0 11px;
}
.circle {
    width: 34px;
    height: 34px;
    flex: none;
    border-radius: 50%;
    display: flex;
    align-items: center;
    justify-content: center;
    color: var(--c);
    background: color-mix(in srgb, var(--c) 20%, transparent);
}
.circle.dim {
    color: #565a72;
}
.info {
    margin-left: 10px;
    flex: 1;
}
.name {
    font-size: 13px;
    line-height: 16px;
    color: #e9ecf4;
}
.tags {
    display: flex;
    gap: 6px;
    margin-top: 4px;
}
.tag {
    height: 17px;
    line-height: 17px;
    padding: 0 7px;
    border-radius: 4px;
    background: #1f2330;
    color: #d3d8e4;
    font-size: 11px;
}
.tag-green {
    background: rgba(34, 197, 94, .1);
    color: var(--green);
}
.tag-red {
    background: rgba(239, 68, 68, .1);
    color: var(--red);
}
.tag-blue {
    background: rgba(59, 130, 246, .1);
    color: var(--blue);
}
.amt-box {
    text-align: right;
    margin-right: 12px;
}
.amt {
    font-family: var(--mono);
    font-size: 13.3px;
    font-weight: 700;
    line-height: 16px;
    color: #e8ecf4;
}
.amt.green {
    color: var(--green);
}
.amt-sub {
    font-size: 10.6px;
    line-height: 13px;
    color: var(--soft);
}
.acts {
    display: flex;
    gap: 4px;
}
.act {
    width: 22px;
    height: 17px;
    padding: 0;
    display: flex;
    align-items: center;
    justify-content: center;
    background: none;
    border: 1px solid #262a35;
    border-radius: 9px;
    color: #f6f8fb;
}
.act svg {
    width: 13px;
    height: 13px;
}
.act.del {
    color: var(--red);
}

/* linha actual */
.actual, .cycle {
    margin: 0 -1px -1px -4px;
    background: var(--card-low);
    border-radius: 0 0 10px 10px;
}
.actual {
    height: 40px;
    display: flex;
    align-items: center;
    padding: 0 15px 0 19px;
}
.a-label {
    font-size: 9.4px;
    font-weight: 600;
    color: var(--blue);
}
.a-amt {
    margin-left: 9px;
    font-family: var(--mono);
    font-size: 11.6px;
    color: #e8ecf4;
}
.a-dot {
    margin: 0 6px;
    color: var(--mute);
}
.a-note {
    font-size: 10.5px;
    color: var(--soft);
}
.a-note.under {
    color: var(--green);
}
.bars {
    margin-left: auto;
    height: 22px;
    display: flex;
    align-items: flex-end;
    gap: 2px;
}
.bars i {
    width: 6px;
    background: var(--blue);
}
.green-bars i {
    background: var(--green);
}
.h16 { height: 16px; }
.h18 { height: 18px; }
.h20 { height: 20px; }
.h21 { height: 21px; }
.h22 { height: 22px; }
.alloc {
    margin-left: 22px;
    display: flex;
    align-items: center;
    gap: 4px;
    font-size: 10.3px;
    color: var(--soft);
}
.alloc svg {
    width: 12px;
    height: 12px;
}
.match {
    width: 111px;
    height: 22px;
    margin-left: 17px;
    padding: 0;
    display: flex;
    align-items: center;
    justify-content: center;
    gap: 4px;
    border: 1px solid var(--blue);
    border-radius: 1px;
    background: none;
    color: var(--blue);
    font-family: var(--sans);
    font-size: 10px;
}
.match svg {
    width: 12px;
    height: 12px;
}
.cycle {
    height: 41px;
    padding: 6px 15px 0 19px;
}
.cycle-row {
    display: flex;
    align-items: center;
    height: 18px;
}
.cycle-label {
    color: var(--green);
}
.cycle-row .a-amt {
    margin-left: 6px;
    font-size: 10px;
}
.cycle-row .a-note {
    margin-left: 3px;
}
.cycle-right {
    margin-left: auto;
    font-size: 9.4px;
    color: var(--soft);
}
.progress {
    height: 6px;
    margin-top: 2px;
    border-radius: 3px;
    background: var(--green);
}

/* painel direito */
.col-side {
    display: flex;
    flex-direction: column;
    gap: 10px;
}
.panel {
    background: var(--card);
    border: 1px solid var(--line);
    border-radius: 10px;
    padding: 0 16px;
}
.panel-pie {
    height: 540px;
    padding-top: 16px;
}
.panel-title {
    font-size: 13px;
    line-height: 18px;
    font-weight: 500;
}
.panel-sub {
    font-size: 11px;
    line-height: 16px;
    margin-top: 2px;
    color: var(--mute);
}
.pie {
    display: block;
    width: 222px;
    height: 222px;
    margin: 11px auto 0;
    stroke: #161924;
    stroke-width: 1.2;
}
.legend {
    margin-top: 26px;
}
.leg {
    height: 19px;
    display: flex;
    align-items: center;
    font-size: 11px;
    color: var(--soft);
}
.sw {
    width: 10px;
    height: 10px;
    border-radius: 2px;
    margin-right: 8px;
}
.leg-name {
    flex: 1;
}
.leg-val {
    font-family: var(--mono);
    font-size: 10px;
    color: #e8ecf4;
}
.leg-pct {
    width: 50px;
    text-align: right;
    font-size: 9.6px;
    color: var(--mute);
}
.panel-needs {
    height: 105px;
    padding-top: 14px;
}
.panel-head {
    font-size: 10px;
    font-weight: 700;
    line-height: 14px;
    color: var(--soft);
}
.need {
    display: flex;
    align-items: center;
    height: 32px;
    font-size: 12px;
    color: var(--soft);
}
.need .ico {
    width: 13px;
    height: 13px;
    margin-right: 9px;
}
.need-line {
    margin-top: 4px;
    border-bottom: 1px solid var(--line);
}
.need-name {
    flex: 1;
}
.need-val {
    font-family: var(--mono);
    font-size: 13.3px;
    color: #e8ecf4;
}
.panel-cats {
    height: 342px;
    margin-top: 2px;
    padding-top: 14px;
}
.panel-cats .panel-head {
    margin-bottom: 6px;
}
.cat {
    display: flex;
    align-items: center;
    height: 22px;
    font-size: 11.6px;
    color: var(--soft);
}
.dot {
    width: 8px;
    height: 8px;
    border-radius: 50%;
    margin-right: 8px;
}
.cat-name {
    flex: 1;
}
.cat-val {
    font-family: var(--mono);
    font-size: 11.5px;
    color: #e8ecf4;
}
.cat-pct {
    margin-left: 8px;
    font-size: 10.5px;
    color: var(--mute);
}

/* rodape */
.updated {
    height: 26px;
    flex: none;
    padding-left: 20px;
    line-height: 25px;
    font-size: 11px;
    color: var(--soft);
    background: #0f121b;
    border-top: 1px solid #20232e;
    border-bottom: 1px solid #171a23;
}
.status {
    height: 21px;
    flex: none;
    display: flex;
    justify-content: space-between;
    align-items: center;
    padding: 0 14px 0 16px;
    font-size: 10.4px;
    color: var(--soft);
    background: #0f121b;
}
.status-right {
    display: flex;
    gap: 14px;
}
.status-right b {
    color: #fff;
}
```
